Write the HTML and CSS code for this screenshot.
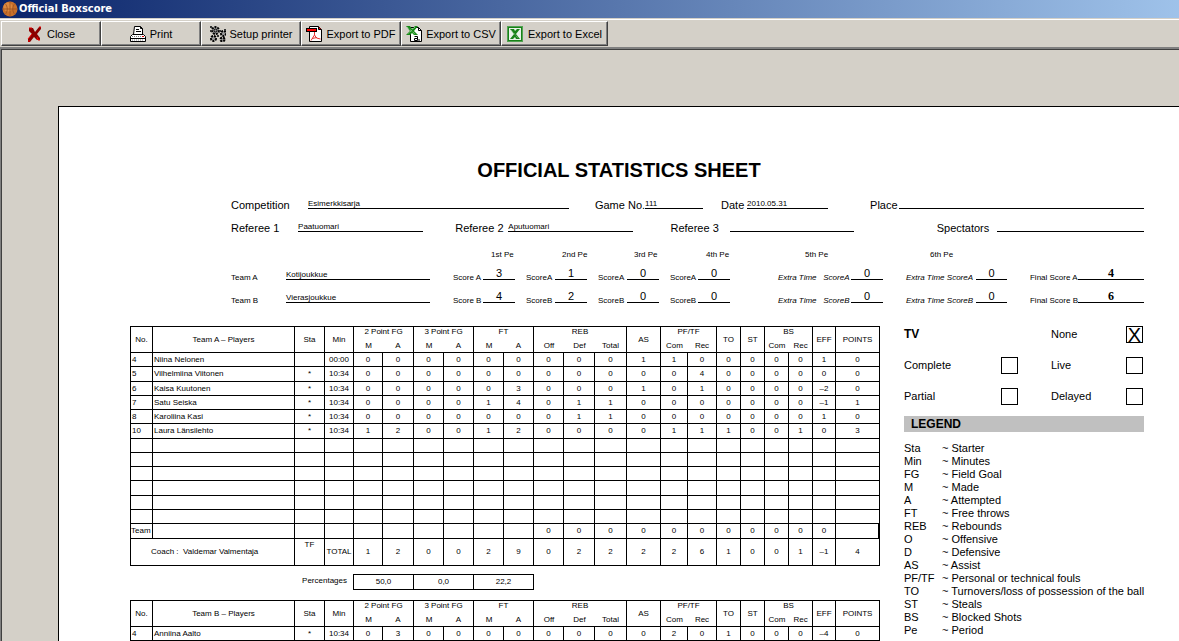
FILE: index.html
```html
<!DOCTYPE html>
<html lang="en">
<head>
<meta charset="utf-8">
<title>Official Boxscore</title>
<link rel="stylesheet" href="styles.css">
</head>
<body>
<header class="titlebar">
  <svg class="ball" viewBox="0 0 16 16" aria-hidden="true"><circle cx="8" cy="8" r="7.5" fill="#c8702a"/><circle cx="6" cy="6" r="4.5" fill="#dd8a40"/><path d="M8 .5v15M.5 8h15M3 2.5c3 3 3 8 0 11M13 2.5c-3 3-3 8 0 11" fill="none" stroke="#9a5222" stroke-width=".8"/></svg>
  <h1 class="window-title">Official Boxscore</h1>
</header>

<nav class="toolbar">
  <button class="tool" type="button">
    <svg class="icon" viewBox="0 0 16 16" aria-hidden="true"><path d="M2 2h4l2 4 4-5h2v2l-4 5 3 4v2h-3l-3-3-4 5H1v-3l4-5-3-3z" fill="#8b0000"/><path d="M2 2h3M1 13l4-5M12 1h2M10 11l1 3h2M1 15h2" fill="none" stroke="#f00000"/></svg>
    Close
  </button>
  <button class="tool" type="button">
    <svg class="icon" viewBox="0 0 16 16" aria-hidden="true"><path d="M3.500 8.500L4.500.5h6l2 2v6" fill="#fff" stroke="#000"/><path d="M10.500.5v2h2M6 3.500h3M6 5.500h5" fill="none" stroke="#000"/><path d="M.5 10.500l2-2h11l2 2v5H.5z" fill="#fff" stroke="#000"/><path d="M1 12.500h14" stroke="#000"/><path d="M2 10.500h12M2 14h12" stroke="#808080" stroke-dasharray="1 1"/><path d="M12 10h2v1h-2z" fill="#e00000"/></svg>
    Print
  </button>
  <button class="tool" type="button">
    <svg class="icon" viewBox="0 0 16 16" aria-hidden="true"><g fill="none" stroke="#000"><circle cx="5.500" cy="4.500" r="3.500" fill="#999" stroke-width="2" stroke-dasharray="2 1"/><circle cx="5.500" cy="4.500" r="1.500"/><circle cx="13.500" cy="7.500" r="2.500" fill="#999" stroke-width="2" stroke-dasharray="2 1"/><circle cx="3.500" cy="12.500" r="2.500" fill="#999" stroke-width="2" stroke-dasharray="2 1"/><circle cx="12.500" cy="13.500" r="2" fill="#999" stroke-width="2" stroke-dasharray="2 1"/></g><path d="M0 0h2v2H0zM0 4h1v2H0zM9 4h2v2H9zM7 9h2v2H7zM14 3h2v2h-2z" fill="#333"/></svg>
    Setup printer
  </button>
  <button class="tool" type="button">
    <svg class="icon" viewBox="0 0 16 16" aria-hidden="true"><path d="M3.500.5h9l3 3v12h-12z" fill="#fff" stroke="#000"/><path d="M12.500.5v3h3" fill="#d00" stroke="#000"/><path d="M0 2h11v4H0z" fill="#000"/><path d="M1 3h9v2H1z" fill="#f00"/><path d="M8.500 6v3L5 14.500M8.500 9l2 3 4 1M6 12.500l5-1" fill="none" stroke="#e83030"/></svg>
    Export to PDF
  </button>
  <button class="tool" type="button">
    <svg class="icon" viewBox="0 0 16 16" aria-hidden="true"><path d="M4.500 1.500h8l3 3v11h-11z" fill="#fff" stroke="#000"/><path d="M12.500 1.500v3h3" fill="none" stroke="#000"/><path d="M0 0h4l2 3 3-3h3L8 5l4 4H8L6 7 4 9H0l4-4z" fill="#168a16"/><path d="M1 1l8 7M9 1L2 8" stroke="#a4d4a4" stroke-dasharray="1 1"/><path d="M8.500 10.500h3v4h-3v-2h3M13 13v2" fill="none" stroke="#000"/></svg>
    Export to CSV
  </button>
  <button class="tool tool-wide" type="button">
    <svg class="icon" viewBox="0 0 16 16" aria-hidden="true"><path d="M0 0h16v16H0z" fill="#178217"/><path d="M.5.5h15v15H.5z" fill="none" stroke="#8fc08f" stroke-dasharray="1 1"/><path d="M2 2h12v12H2z" fill="#e8f2e8"/><path d="M3 3h4l1 2 2-2h3L9 8l4 5H9L8 11l-2 2H3l4-5z" fill="#178217"/><path d="M4 4l7 8" stroke="#8fc08f" stroke-dasharray="1 1"/></svg>
    Export to Excel
  </button>
</nav>

<main class="preview">
<article class="paper">
  <h2 class="sheet-title">OFFICIAL STATISTICS SHEET</h2>

  <section class="info">
    <div class="line-row game-row">
      <span>Competition</span><span class="value">Esimerkkisarja</span>
      <span class="pad-m">Game No.</span><span class="value">111</span>
      <span class="pad-s">Date</span><span class="value">2010.05.31</span>
      <span class="pad-l">Place</span><span class="value"></span>
    </div>
    <div class="line-row referee-row">
      <span>Referee 1</span><span class="value">Paatuomari</span>
      <span class="pad-n">Referee 2</span><span class="value">Aputuomari</span>
      <span class="pad-o">Referee 3</span><span class="value"></span>
      <span class="pad-x">Spectators</span><span class="value"></span>
    </div>
    <div class="scores">
      <span class="period first">1st Pe</span><span class="period">2nd Pe</span><span class="period">3rd Pe</span><span class="period">4th Pe</span><span class="period fifth">5th Pe</span><span class="period">6th Pe</span><span class="period"></span>

      <span>Team A</span><span class="value">Kotijoukkue</span>
      <span class="pad-t">Score A</span><span class="score">3</span>
      <span class="pad-q">ScoreA</span><span class="score">1</span>
      <span class="pad-q">ScoreA</span><span class="score">0</span>
      <span class="pad-q">ScoreA</span><span class="score">0</span>
      <span class="extra pad-e">Extra Time &nbsp; ScoreA</span><span class="score">0</span>
      <span class="extra pad-t">Extra Time ScoreA</span><span class="score">0</span>
      <span class="pad-t">Final Score A</span><span class="score final">4</span>

      <span>Team B</span><span class="value">Vierasjoukkue</span>
      <span class="pad-t">Score B</span><span class="score">4</span>
      <span class="pad-q">ScoreB</span><span class="score">2</span>
      <span class="pad-q">ScoreB</span><span class="score">0</span>
      <span class="pad-q">ScoreB</span><span class="score">0</span>
      <span class="extra pad-e">Extra Time &nbsp; ScoreB</span><span class="score">0</span>
      <span class="extra pad-t">Extra Time ScoreB</span><span class="score">0</span>
      <span class="pad-t">Final Score B</span><span class="score final">6</span>
    </div>
  </section>

  <div class="columns">
    <div class="stats">
      <table class="box">
        <colgroup><col class="c22"><col class="c142"><col class="c30"><col class="c29"><col class="c29"><col class="c31"><col class="c30"><col class="c30"><col class="c30"><col class="c30"><col class="c30"><col class="c31"><col class="c32"><col class="c34"><col class="c27"><col class="c29"><col class="c24"><col class="c24"><col class="c24"><col class="c24"><col class="c23"><col class="c44"></colgroup>
        <thead>
          <tr><th rowspan="2">No.</th><th rowspan="2">Team A – Players</th><th rowspan="2">Sta</th><th rowspan="2">Min</th><th class="group" colspan="2">2 Point FG</th><th class="group" colspan="2">3 Point FG</th><th class="group" colspan="2">FT</th><th class="group" colspan="3">REB</th><th rowspan="2">AS</th><th class="group" colspan="2">PF/TF</th><th rowspan="2">TO</th><th rowspan="2">ST</th><th class="group" colspan="2">BS</th><th rowspan="2">EFF</th><th rowspan="2">POINTS</th></tr>
          <tr><th class="open">M</th><th>A</th><th class="open">M</th><th>A</th><th class="open">M</th><th>A</th><th class="open">Off</th><th class="open">Def</th><th>Total</th><th class="open">Com</th><th>Rec</th><th class="open">Com</th><th>Rec</th></tr>
        </thead>
        <tbody>
          <tr><td>4</td><td>Niina Nelonen</td><td></td><td>00:00</td><td>0</td><td>0</td><td>0</td><td>0</td><td>0</td><td>0</td><td>0</td><td>0</td><td>0</td><td>1</td><td>1</td><td>0</td><td>0</td><td>0</td><td>0</td><td>0</td><td>1</td><td>0</td></tr>
          <tr><td>5</td><td>Vilhelmiina Viitonen</td><td>*</td><td>10:34</td><td>0</td><td>0</td><td>0</td><td>0</td><td>0</td><td>0</td><td>0</td><td>0</td><td>0</td><td>0</td><td>0</td><td>4</td><td>0</td><td>0</td><td>0</td><td>0</td><td>0</td><td>0</td></tr>
          <tr><td>6</td><td>Kaisa Kuutonen</td><td>*</td><td>10:34</td><td>0</td><td>0</td><td>0</td><td>0</td><td>0</td><td>3</td><td>0</td><td>0</td><td>0</td><td>1</td><td>0</td><td>1</td><td>0</td><td>0</td><td>0</td><td>0</td><td>–2</td><td>0</td></tr>
          <tr><td>7</td><td>Satu Seiska</td><td>*</td><td>10:34</td><td>0</td><td>0</td><td>0</td><td>0</td><td>1</td><td>4</td><td>0</td><td>1</td><td>1</td><td>0</td><td>0</td><td>0</td><td>0</td><td>0</td><td>0</td><td>0</td><td>–1</td><td>1</td></tr>
          <tr><td>8</td><td>Karoliina Kasi</td><td>*</td><td>10:34</td><td>0</td><td>0</td><td>0</td><td>0</td><td>0</td><td>0</td><td>0</td><td>1</td><td>1</td><td>0</td><td>0</td><td>0</td><td>0</td><td>0</td><td>0</td><td>0</td><td>1</td><td>0</td></tr>
          <tr><td>10</td><td>Laura Länsilehto</td><td>*</td><td>10:34</td><td>1</td><td>2</td><td>0</td><td>0</td><td>1</td><td>2</td><td>0</td><td>0</td><td>0</td><td>0</td><td>1</td><td>1</td><td>1</td><td>0</td><td>0</td><td>1</td><td>0</td><td>3</td></tr>
          <tr><td></td><td></td><td></td><td></td><td></td><td></td><td></td><td></td><td></td><td></td><td></td><td></td><td></td><td></td><td></td><td></td><td></td><td></td><td></td><td></td><td></td><td></td></tr>
          <tr><td></td><td></td><td></td><td></td><td></td><td></td><td></td><td></td><td></td><td></td><td></td><td></td><td></td><td></td><td></td><td></td><td></td><td></td><td></td><td></td><td></td><td></td></tr>
          <tr><td></td><td></td><td></td><td></td><td></td><td></td><td></td><td></td><td></td><td></td><td></td><td></td><td></td><td></td><td></td><td></td><td></td><td></td><td></td><td></td><td></td><td></td></tr>
          <tr><td></td><td></td><td></td><td></td><td></td><td></td><td></td><td></td><td></td><td></td><td></td><td></td><td></td><td></td><td></td><td></td><td></td><td></td><td></td><td></td><td></td><td></td></tr>
          <tr><td></td><td></td><td></td><td></td><td></td><td></td><td></td><td></td><td></td><td></td><td></td><td></td><td></td><td></td><td></td><td></td><td></td><td></td><td></td><td></td><td></td><td></td></tr>
          <tr><td></td><td></td><td></td><td></td><td></td><td></td><td></td><td></td><td></td><td></td><td></td><td></td><td></td><td></td><td></td><td></td><td></td><td></td><td></td><td></td><td></td><td></td></tr>
        </tbody>
        <tfoot>
          <tr class="team-row"><td>Team</td><td></td><td></td><td></td><td></td><td></td><td></td><td></td><td></td><td></td><td>0</td><td>0</td><td>0</td><td>0</td><td>0</td><td>0</td><td>0</td><td>0</td><td>0</td><td>0</td><td>0</td><td></td></tr>
          <tr class="total-row"><td class="coach" colspan="2">Coach : &nbsp;Valdemar Valmentaja</td><td class="tf">TF</td><td>TOTAL</td><td>1</td><td>2</td><td>0</td><td>0</td><td>2</td><td>9</td><td>0</td><td>2</td><td>2</td><td>2</td><td>2</td><td>6</td><td>1</td><td>0</td><td>0</td><td>1</td><td>–1</td><td>4</td></tr>
        </tfoot>
      </table>

      <div class="percentages">
        <span class="percent-label">Percentages</span><span class="percent first-percent">50,0</span><span class="percent">0,0</span><span class="percent">22,2</span>
      </div>

      <table class="box">
        <colgroup><col class="c22"><col class="c142"><col class="c30"><col class="c29"><col class="c29"><col class="c31"><col class="c30"><col class="c30"><col class="c30"><col class="c30"><col class="c30"><col class="c31"><col class="c32"><col class="c34"><col class="c27"><col class="c29"><col class="c24"><col class="c24"><col class="c24"><col class="c24"><col class="c23"><col class="c44"></colgroup>
        <thead>
          <tr><th rowspan="2">No.</th><th rowspan="2">Team B – Players</th><th rowspan="2">Sta</th><th rowspan="2">Min</th><th class="group" colspan="2">2 Point FG</th><th class="group" colspan="2">3 Point FG</th><th class="group" colspan="2">FT</th><th class="group" colspan="3">REB</th><th rowspan="2">AS</th><th class="group" colspan="2">PF/TF</th><th rowspan="2">TO</th><th rowspan="2">ST</th><th class="group" colspan="2">BS</th><th rowspan="2">EFF</th><th rowspan="2">POINTS</th></tr>
          <tr><th class="open">M</th><th>A</th><th class="open">M</th><th>A</th><th class="open">M</th><th>A</th><th class="open">Off</th><th class="open">Def</th><th>Total</th><th class="open">Com</th><th>Rec</th><th class="open">Com</th><th>Rec</th></tr>
        </thead>
        <tbody>
          <tr><td>4</td><td>Anniina Aalto</td><td>*</td><td>10:34</td><td>0</td><td>3</td><td>0</td><td>0</td><td>0</td><td>0</td><td>0</td><td>0</td><td>0</td><td>0</td><td>2</td><td>0</td><td>1</td><td>0</td><td>0</td><td>0</td><td>–4</td><td>0</td></tr>
        </tbody>
      </table>
    </div>

    <aside class="side">
      <div class="tv">
        <h3 class="tv-title">TV</h3>
        <label for="tv-none">None</label><input class="tick" type="checkbox" id="tv-none" checked>
        <label for="tv-complete">Complete</label><input class="tick" type="checkbox" id="tv-complete">
        <label for="tv-live">Live</label><input class="tick" type="checkbox" id="tv-live">
        <label for="tv-partial">Partial</label><input class="tick" type="checkbox" id="tv-partial">
        <label for="tv-delayed">Delayed</label><input class="tick" type="checkbox" id="tv-delayed">
      </div>
      <h3 class="legend-title">LEGEND</h3>
      <dl class="legend">
        <dt>Sta</dt><dd>~ Starter</dd>
        <dt>Min</dt><dd>~ Minutes</dd>
        <dt>FG</dt><dd>~ Field Goal</dd>
        <dt>M</dt><dd>~ Made</dd>
        <dt>A</dt><dd>~ Attempted</dd>
        <dt>FT</dt><dd>~ Free throws</dd>
        <dt>REB</dt><dd>~ Rebounds</dd>
        <dt>O</dt><dd>~ Offensive</dd>
        <dt>D</dt><dd>~ Defensive</dd>
        <dt>AS</dt><dd>~ Assist</dd>
        <dt>PF/TF</dt><dd>~ Personal or technical fouls</dd>
        <dt>TO</dt><dd>~ Turnovers/loss of possession of the ball</dd>
        <dt>ST</dt><dd>~ Steals</dd>
        <dt>BS</dt><dd>~ Blocked Shots</dd>
        <dt>Pe</dt><dd>~ Period</dd>
      </dl>
    </aside>
  </div>
</article>
</main>
</body>
</html>
```
FILE: styles.css
```css
* { box-sizing: border-box; }

body {
  display: flex;
  flex-direction: column;
  height: 100vh;
  margin: 0;
  overflow: hidden;
  background: #d4d0c8;
  color: #000;
  font: 11px/14px "Liberation Sans", Arial, sans-serif;
}

h1, h2, h3, dl, dd { margin: 0; }

/* Window chrome */
.titlebar {
  display: flex;
  flex: none;
  align-items: center;
  gap: 1px;
  height: 18px;
  padding-left: 2px;
  background: linear-gradient(to right, #0a246a, #a6caf0 105%);
}
.ball { width: 16px; height: 16px; }
.window-title {
  color: #fff;
  font: bold 11px/16px "DejaVu Sans Condensed", "Noto Sans", sans-serif;
}

.toolbar {
  display: flex;
  flex: none;
  margin-top: 1px;
  padding: 1px 0 1px 1px;
  border-top: 1px solid #fff;
}
.tool {
  display: flex;
  align-items: center;
  justify-content: center;
  gap: 4px;
  width: 100px;
  height: 25px;
  padding: 0;
  border: 1px solid;
  border-color: #fff #404040 #404040 #fff;
  box-shadow: inset -1px -1px 0 #808080;
  background: #d4d0c8;
  color: #000;
  font: inherit;
  white-space: nowrap;
}
.tool-wide { width: 107px; gap: 5px; }
.icon { flex: none; width: 16px; height: 16px; }

/* Print preview */
.preview {
  display: flex;
  flex: 1;
  min-height: 0;
  padding: 56px 0 0 56px;
  border-top: 1px solid #404040;
  border-left: 1px solid #404040;
  outline: 2px solid #808080;
  margin: 2px 0 0 1px;
  overflow: hidden;
}
.paper {
  flex: 1;
  min-width: 0;
  height: max-content;
  padding: 51px 35px 20px 71px;
  border: solid #000;
  border-width: 1px 0 0 1px;
  background: #fff;
}
.sheet-title {
  padding-right: 36px;
  font-size: 20px;
  line-height: 24px;
  text-align: center;
}

/* Game information */
.info { padding: 13px 0 20px 101px; white-space: nowrap; }
.line-row { display: grid; align-items: end; height: 17px; }
.game-row { grid-template-columns: 77fr 261fr 76fr 58fr 44fr 81fr 71fr 245fr; }
.referee-row {
  grid-template-columns: 67fr 125fr 85fr 125fr 96fr 124fr 143fr 147fr;
  margin-top: 6px;
}
.value {
  height: 14px;
  margin-bottom: 3px;
  padding-top: 4px;
  border-bottom: 1px solid #000;
  font-size: 8px;
  line-height: 10px;
}
.pad-q { padding-left: 11px; }
.pad-s { padding-left: 18px; }
.pad-t { padding-left: 23px; }
.pad-m { padding-left: 26px; }
.pad-n { padding-left: 32px; }
.pad-o { padding-left: 37px; }
.pad-l { padding-left: 42px; }
.pad-e { padding-left: 48px; }
.pad-x { padding-left: 83px; }

.scores {
  display: grid;
  grid-template-columns: 55fr 144fr 53fr 32fr 40fr 32fr 40fr 32fr 39fr 32fr 121fr 32fr 93fr 31fr 69fr 66fr;
  grid-template-rows: 10px 17px 17px;
  row-gap: 6px;
  align-items: end;
  margin-top: 15px;
  font-size: 8px;
  line-height: 10px;
}
.period { grid-column: span 2; padding-left: 47px; }
.first { grid-column: 3 / span 2; padding-left: 61px; }
.fifth { padding-left: 75px; }
.extra { font-style: italic; }
.score {
  height: 13px;
  margin-bottom: 3px;
  border-bottom: 1px solid #000;
  font-size: 11px;
  line-height: 12px;
  text-align: center;
}
.final { font: bold 12px/12px "Liberation Serif", "Times New Roman", serif; }

/* Statistics */
.columns {
  display: grid;
  grid-template-columns: minmax(0, 1fr) 240px;
  gap: 24px;
}
.box {
  width: 100%;
  table-layout: fixed;
  border: solid #000;
  border-width: 1px 0 0 1px;
  border-spacing: 0;
  font-size: 8px;
  line-height: 12px;
  text-align: center;
  white-space: nowrap;
}
.c22 { width: 22px; }
.c23 { width: 23px; }
.c24 { width: 24px; }
.c27 { width: 27px; }
.c29 { width: 29px; }
.c30 { width: 30px; }
.c31 { width: 31px; }
.c32 { width: 32px; }
.c34 { width: 34px; }
.c44 { width: 44px; }
.c142 { width: 142px; }
.box th, .box td {
  height: 14px;
  padding: 0;
  border: solid #000;
  border-width: 0 1px 1px 0;
}
.box th { height: 13px; font-weight: normal; }
.box .group { border-bottom: 0; line-height: 10px; vertical-align: top; }
.box .open { border-right: 0; }
.box tbody tr:nth-child(4n+2) td { height: 15px; }
.box tbody td:nth-child(-n+2) { padding-left: 1px; text-align: left; }
.box .team-row td { height: 15px; }
.box .team-row td:first-child { text-align: left; }
.box .team-row td:last-child { border-right-width: 2px; }
.box .total-row td { height: 27px; }
.box .coach { padding-left: 20px; text-align: left; }
.box .tf { vertical-align: top; }

.percentages {
  display: grid;
  grid-template-columns: 223fr 61fr 60fr 60fr 346fr;
  margin: 8px 0 10px;
  font-size: 8px;
  line-height: 14px;
  text-align: center;
}
.percent-label { padding-right: 6px; text-align: right; }
.percent { border: solid #000; border-width: 1px 1px 1px 0; }
.first-percent { border-left-width: 1px; }

/* Broadcast and legend */
.side { white-space: nowrap; }
.tv {
  display: grid;
  grid-template-columns: 97px 50px 75px 17px;
  grid-auto-rows: 16px;
  row-gap: 15px;
  align-items: center;
}
.tv-title { grid-column: span 2; font-size: 12px; }
.tick {
  width: 17px;
  height: 17px;
  margin: 0;
  border: 1px solid #000;
  background: #fff;
  appearance: none;
}
.tick:checked::before {
  content: "X";
  display: block;
  font: 20px/16px "Liberation Sans", Arial, sans-serif;
  text-align: center;
}
.legend-title {
  margin: 12px 0 10px;
  padding-left: 7px;
  background: #c0c0c0;
  font-size: 12px;
  line-height: 16px;
}
.legend {
  display: grid;
  grid-template-columns: 38px 1fr;
  line-height: 13px;
}
```
